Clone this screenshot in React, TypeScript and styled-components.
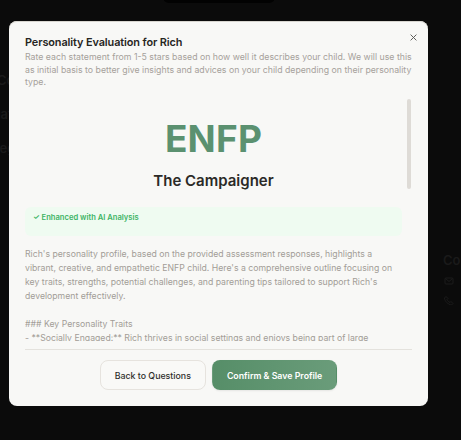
import React from "react";
import styled, { createGlobalStyle } from "styled-components";

const Global = createGlobalStyle`
  html, body { margin: 0; padding: 0; background: #0b0b0b; }
  body { font-family: Inter, "Noto Sans", Arial, sans-serif; }
  #root { width: 461px; height: 440px; overflow: hidden; position: relative; }
`;

const Page = styled.div`
  width: 461px;
  height: 440px;
  display: flex;
  justify-content: space-between;
  background: #0b0b0b;
  color: #1a1a1a;
  font-size: 13px;
`;

const PageCol = styled.div<{ $top: number; $gap: number; $pad?: number }>`
  display: flex;
  flex-direction: column;
  padding-top: ${(p) => p.$top}px;
  padding-left: ${(p) => p.$pad ?? 0}px;
  gap: ${(p) => p.$gap}px;
  overflow: hidden;
  width: 30px;
  box-sizing: border-box;
`;

const Ghost = styled.span<{ $shift?: number }>`
  white-space: nowrap;
  margin-left: ${(p) => p.$shift ?? 0}px;
  font-weight: 600;
  line-height: 16px;
`;

const GhostIcon = styled.div`
  display: flex;
  align-items: center;
  height: 12px;
  padding-left: 1px;
`;

const Pill = styled.div`
  position: absolute;
  left: 163px;
  top: -10px;
  width: 112px;
  height: 13px;
  border-radius: 6px;
  background: #020202;
`;

const Overlay = styled.div`
  position: absolute;
  inset: 0;
  padding: 21px 0 0 9px;
`;

const Modal = styled.div`
  width: 419px;
  height: 385px;
  box-sizing: border-box;
  background: #f8f8f6;
  border-radius: 8px;
  padding: 14px 16px 16px 16px;
  display: flex;
  flex-direction: column;
  position: relative;
  box-shadow: 0 1px 0 #d8d6d0 inset;
`;

const Header = styled.div`
  display: flex;
  flex-direction: column;
  gap: 2px;
`;

const Title = styled.h2`
  margin: 0;
  font-size: 10.9px;
  line-height: 14px;
  font-weight: 600;
  color: #262522;
  letter-spacing: -0.1px;
`;

const Desc = styled.p`
  margin: 0;
  font-size: 8.75px;
  line-height: 12.5px;
  color: #a6a19b;
`;

const Close = styled.button`
  position: absolute;
  top: 9px;
  right: 8px;
  width: 14px;
  height: 14px;
  padding: 0;
  border: 0;
  background: none;
  display: flex;
  align-items: center;
  justify-content: center;
`;

const ScrollArea = styled.div`
  margin-top: 10.5px;
  height: 242px;
  display: flex;
`;

const Content = styled.div`
  flex: 1;
  overflow: hidden;
  display: flex;
  flex-direction: column;
`;

const Track = styled.div`
  width: 4px;
  margin: 0 1px 0 5px;
  display: flex;
  flex-direction: column;
`;

const Thumb = styled.div`
  height: 90px;
  border-radius: 2px;
  background: #dedbd6;
`;

const TypeCode = styled.div`
  text-align: center;
  font-size: 37px;
  line-height: 44px;
  font-weight: 700;
  color: #5b9170;
  margin-top: 18px;
  letter-spacing: 0.2px;
`;

const TypeName = styled.div`
  text-align: center;
  font-size: 15px;
  line-height: 20px;
  font-weight: 600;
  color: #2b2a27;
  margin-top: 10px;
`;

const AiBox = styled.div`
  margin-top: 16px;
  background: #effbf1;
  border-radius: 6px;
  padding: 6px 8px 13px;
  font-size: 7.6px;
  line-height: 10px;
  font-weight: 600;
  color: #3cb464;
  display: flex;
  align-items: center;
  gap: 2px;
`;

const Body = styled.div`
  margin-top: 11px;
  font-size: 8.7px;
  line-height: 14px;
  color: #a29d97;
  white-space: pre-wrap;
`;

const Footer = styled.div`
  margin-top: auto;
  border-top: 1px solid #e4e2dd;
  padding-top: 10px;
  display: flex;
  justify-content: center;
  gap: 6px;
`;

const Button = styled.button<{ $primary?: boolean }>`
  height: 30px;
  box-sizing: border-box;
  border-radius: 8px;
  font-family: Inter, "Noto Sans", Arial, sans-serif;
  font-size: 8.8px;
  font-weight: ${(p) => (p.$primary ? 600 : 500)};
  padding: 0 14px;
  border: 1px solid ${(p) => (p.$primary ? "transparent" : "#e6e3de")};
  background: ${(p) =>
    p.$primary ? "linear-gradient(90deg, #568e68, #6a9c7a)" : "#f9f9f7"};
  color: ${(p) => (p.$primary ? "#ffffff" : "#2f2e2b")};
  box-shadow: ${(p) => (p.$primary ? "0 1px 2px rgba(0,0,0,0.08)" : "none")};
`;

const body = `Rich's personality profile, based on the provided assessment responses, highlights a vibrant, creative, and empathetic ENFP child. Here's a comprehensive outline focusing on key traits, strengths, potential challenges, and parenting tips tailored to support Rich's development effectively.

### Key Personality Traits
- **Socially Engaged:** Rich thrives in social settings and enjoys being part of large`;

export default function App() {
  return (
    <>
      <Global />
      <Page>
        <PageCol $top={72} $gap={18}>
          <Ghost $shift={-3}>Co</Ghost>
          <Ghost $shift={-8}>Rati</Ghost>
          <Ghost $shift={-9}>Beg</Ghost>
        </PageCol>
        <PageCol $top={252} $gap={7} $pad={12}>
          <Ghost>Co</Ghost>
          <GhostIcon>
            <svg width="10" height="10" viewBox="0 0 10 10">
              <rect x="1" y="2" width="8" height="6" rx="1" fill="none" stroke="#1c1c1c" strokeWidth="1" />
              <path d="M1.5 2.5L5 5.5 8.5 2.5" fill="none" stroke="#1c1c1c" strokeWidth="1" />
            </svg>
          </GhostIcon>
          <GhostIcon>
            <svg width="10" height="10" viewBox="0 0 10 10">
              <path d="M2 1.5l2 2-1 1c.8 1.5 1.5 2.2 3 3l1-1 2 2-1.5 1.5C4 9.5 .5 6 .5 3z" fill="none" stroke="#1c1c1c" strokeWidth="1" />
            </svg>
          </GhostIcon>
        </PageCol>
      </Page>
      <Pill />
      <Overlay>
        <Modal>
          <Header>
            <Title>Personality Evaluation for Rich</Title>
            <Desc>
              Rate each statement from 1-5 stars based on how well it describes your child. We will use this as initial basis to better give insights and advices on your child depending on their personality type.
            </Desc>
          </Header>
          <Close aria-label="Close">
            <svg width="7" height="7" viewBox="0 0 8 8">
              <path d="M1 1L7 7M7 1L1 7" stroke="#5a5955" strokeWidth="1.1" strokeLinecap="round" />
            </svg>
          </Close>
          <ScrollArea>
            <Content>
              <TypeCode>ENFP</TypeCode>
              <TypeName>The Campaigner</TypeName>
              <AiBox>✓ Enhanced with AI Analysis</AiBox>
              <Body>{body}</Body>
            </Content>
            <Track>
              <Thumb />
            </Track>
          </ScrollArea>
          <Footer>
            <Button>Back to Questions</Button>
            <Button $primary>Confirm &amp; Save Profile</Button>
          </Footer>
        </Modal>
      </Overlay>
    </>
  );
}
